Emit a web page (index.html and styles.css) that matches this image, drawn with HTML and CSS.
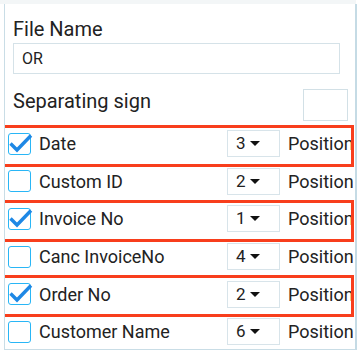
FILE: index.html
```html
<!DOCTYPE HTML>
<html>

<head>
    <title>Export settings</title>
    <meta http-equiv="Content-Type" content="text/html; charset=utf-8" />
    <link rel="stylesheet" href="styles.css">
</head>

<body>
    <div class="topbar"></div>
    <div class="panel">
        <div class="field-label">File Name</div>
        <div class="text-box">OR</div>
        <div class="sep-line">
            <span class="field-label">Separating sign</span>
            <span class="sep-box"></span>
        </div>
        <ul class="fields">
            <li class="row marked">
                <span class="check on"><svg viewBox="0 0 22 22"><path d="M1.5 10.5 L8 17 L22 2.5" /></svg></span>
                <span class="name">Date</span>
                <span class="pos">3<i class="caret"></i></span>
                <span class="pos-label">Position</span>
            </li>
            <li class="row">
                <span class="check"></span>
                <span class="name">Custom ID</span>
                <span class="pos">2<i class="caret"></i></span>
                <span class="pos-label">Position</span>
            </li>
            <li class="row marked">
                <span class="check on"><svg viewBox="0 0 22 22"><path d="M1.5 10.5 L8 17 L22 2.5" /></svg></span>
                <span class="name">Invoice No</span>
                <span class="pos">1<i class="caret"></i></span>
                <span class="pos-label">Position</span>
            </li>
            <li class="row">
                <span class="check"></span>
                <span class="name">Canc InvoiceNo</span>
                <span class="pos">4<i class="caret"></i></span>
                <span class="pos-label">Position</span>
            </li>
            <li class="row marked">
                <span class="check on"><svg viewBox="0 0 22 22"><path d="M1.5 10.5 L8 17 L22 2.5" /></svg></span>
                <span class="name">Order No</span>
                <span class="pos">2<i class="caret"></i></span>
                <span class="pos-label">Position</span>
            </li>
            <li class="row">
                <span class="check"></span>
                <span class="name">Customer Name</span>
                <span class="pos">6<i class="caret"></i></span>
                <span class="pos-label">Position</span>
            </li>
        </ul>
    </div>
</body>

</html>
```

FILE: styles.css
```css
body {
    margin: 0;
    background: #fff;
    font-family: Roboto, "Liberation Sans", sans-serif;
    color: #222;
}

.topbar {
    width: 356px;
    height: 4px;
    background: #f3f6f7;
}

.panel {
    margin-left: 4px;
    width: 350px;
    height: 345px;
    border-left: 1px solid #c9dde6;
    border-right: 2px solid #c5dbe5;
    border-bottom: 1px solid #c9dde6;
    overflow: hidden;
}

.field-label {
    font-size: 20px;
    line-height: 24px;
    padding-left: 8px;
    padding-top: 13px;
}

.text-box {
    margin: 2px 0 0 8px;
    width: 317px;
    height: 29px;
    border: 1px solid #d5e2e8;
    padding-left: 8px;
    font-size: 16px;
    line-height: 29px;
}

.sep-line {
    display: flex;
    align-items: flex-start;
    justify-content: space-between;
}

.sep-line .field-label {
    padding-top: 15px;
}

.sep-box {
    margin: 15px 7px 0 0;
    width: 43px;
    height: 30px;
    border: 1px solid #d2e0e6;
}

.fields {
    list-style: none;
    margin: 4px 0 0;
    padding: 0;
}

.row {
    position: relative;
    height: 37.6px;
    display: flex;
    align-items: center;
    font-size: 18px;
}

.row.marked::after {
    content: "";
    position: absolute;
    left: -3px;
    right: 1px;
    top: 0;
    bottom: -4px;
    border: 3px solid #f83e1c;
}

.check {
    margin-left: 3px;
    width: 21px;
    height: 20px;
    border: 1px solid #29b6f6;
    border-radius: 3px;
    flex: none;
    position: relative;
}

.check svg {
    position: absolute;
    left: 0;
    top: -1px;
    width: 22px;
    height: 22px;
    overflow: visible;
}

.check path {
    fill: none;
    stroke: #1e88e5;
    stroke-width: 3.4;
}

.name {
    margin-left: 8px;
    flex: 1;
}

.pos {
    width: 43px;
    height: 25px;
    border: 1px solid #d8e4ea;
    padding-left: 8px;
    font-size: 17px;
    line-height: 25px;
    display: flex;
    align-items: center;
}

.caret {
    margin-left: 4px;
    width: 0;
    height: 0;
    border-left: 5px solid transparent;
    border-right: 5px solid transparent;
    border-top: 5px solid #111;
}

.pos-label {
    margin-left: 8px;
    width: 67px;
    flex: none;
    white-space: nowrap;
    font-size: 18px;
}
```
